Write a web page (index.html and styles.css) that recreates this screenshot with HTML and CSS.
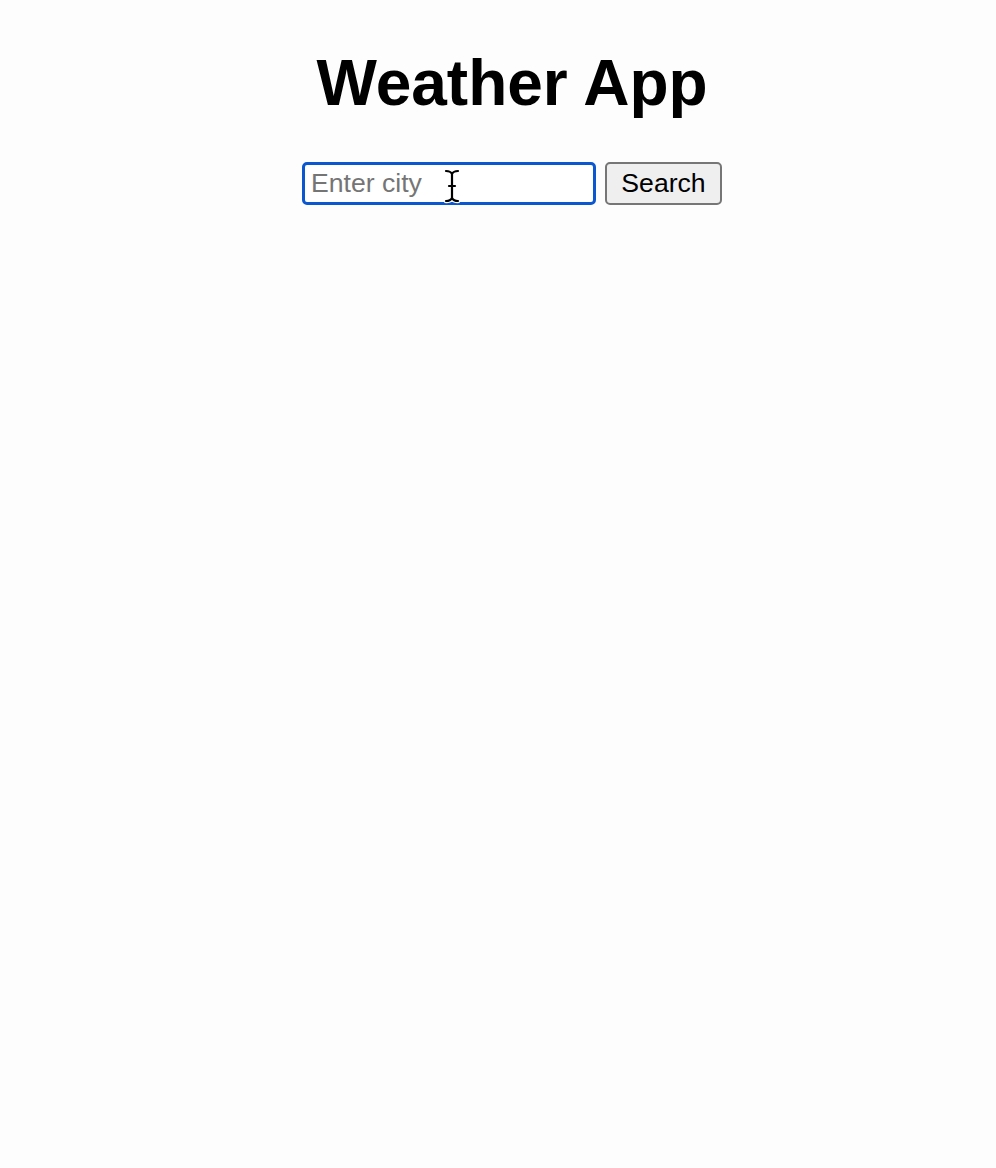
FILE: index.html
```html
<!DOCTYPE html>
<html lang="en">
<head>
<meta charset="utf-8">
<title>Weather App</title>
<link rel="stylesheet" href="styles.css">
</head>
<body>
<main class="app">
  <h1 class="title">Weather App</h1>
  <form class="search">
    <div class="field">
      <input class="city" type="text" placeholder="Enter city">
      <svg class="cursor" width="18" height="36" viewBox="0 0 18 36">
        <path d="M3 3 C6 3 8 4 9 6 C10 4 12 3 15 3 M9 6 V30 M6 18 H12 M3 33 C6 33 8 32 9 30 C10 32 12 33 15 33" fill="none" stroke="#fff" stroke-width="4.5" stroke-linecap="round"/>
        <path d="M3 3 C6 3 8 4 9 6 C10 4 12 3 15 3 M9 6 V30 M6 18 H12 M3 33 C6 33 8 32 9 30 C10 32 12 33 15 33" fill="none" stroke="#000" stroke-width="2.2" stroke-linecap="round"/>
      </svg>
    </div>
    <button class="btn" type="button">Search</button>
  </form>
</main>
</body>
</html>
```

FILE: styles.css
```css
html, body {
  margin: 0;
  padding: 0;
  background: #fdfdfd;
}
body {
  font-family: "Liberation Sans", Arial, sans-serif;
  color: #000;
  width: 996px;
  height: 1168px;
  overflow: hidden;
}
.app {
  padding-left: 28px;
  display: flex;
  flex-direction: column;
  align-items: center;
}
.title {
  font-size: 64px;
  line-height: 74px;
  font-weight: bold;
  margin: 46px 0 42px;
}
.search {
  display: flex;
  gap: 9px;
  align-items: center;
}
.field {
  position: relative;
}
.city {
  box-sizing: border-box;
  width: 294px;
  height: 43px;
  border: 3px solid #0b57d0;
  border-radius: 5px;
  background: #fff;
  padding: 0 6px;
  font-family: "Liberation Sans", Arial, sans-serif;
  font-size: 26.6px;
  color: #000;
  outline: none;
  display: block;
}
.city::placeholder {
  color: #757575;
}
.cursor {
  position: absolute;
  left: 141px;
  top: 6px;
}
.btn {
  box-sizing: border-box;
  width: 117px;
  height: 43px;
  border: 2px solid #767676;
  border-radius: 5px;
  background: #efefef;
  font-family: "Liberation Sans", Arial, sans-serif;
  font-size: 26.6px;
  color: #000;
  padding: 0;
}
```
